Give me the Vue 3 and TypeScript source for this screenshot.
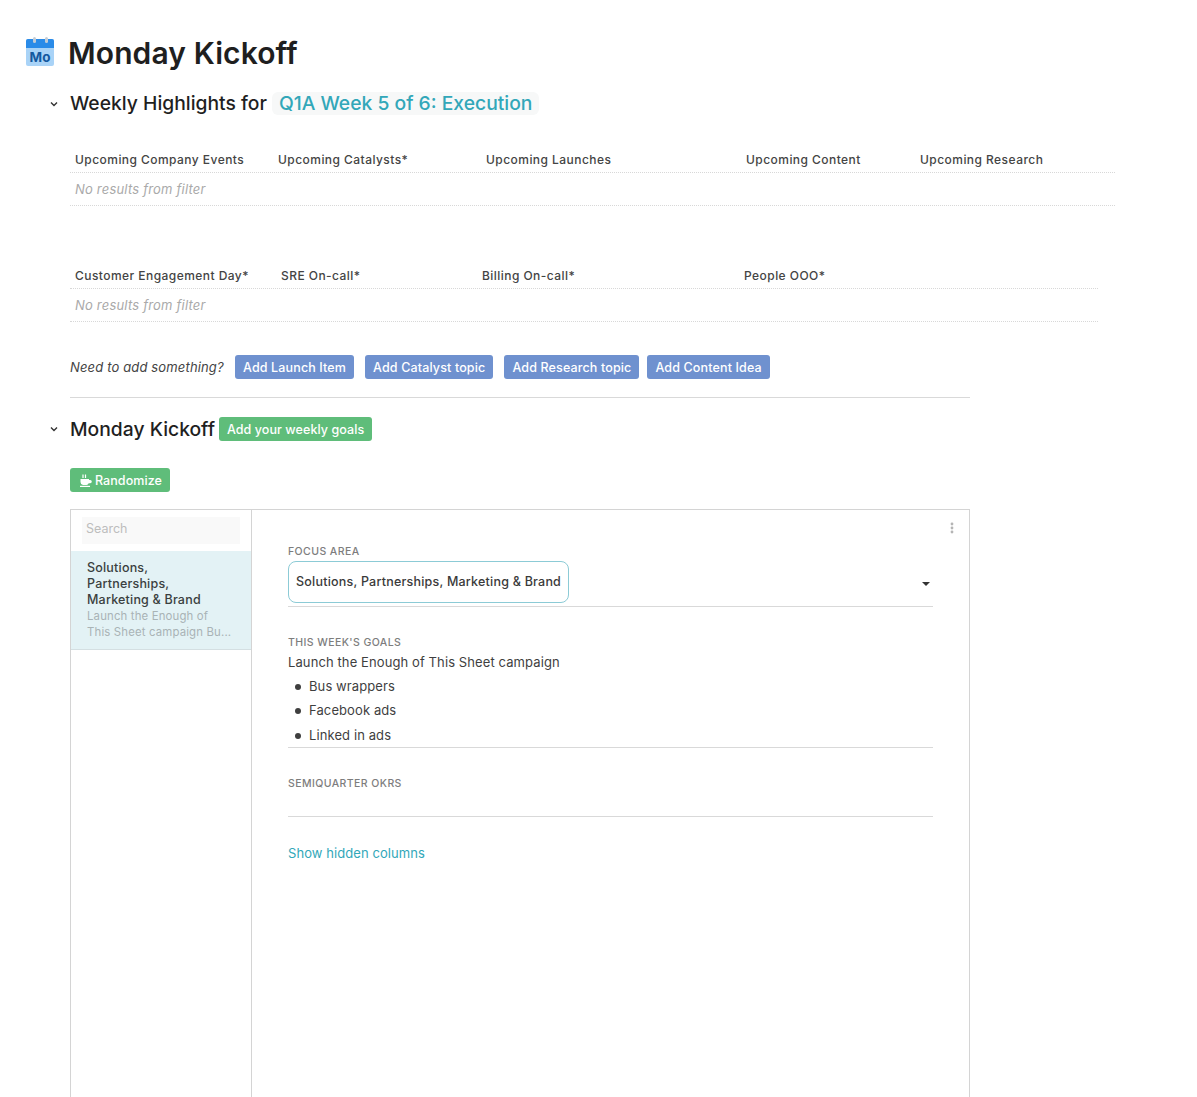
<script setup lang="ts">
interface Column {
  label: string;
  width: string;
}

const highlightColumns: Column[] = [
  { label: 'Upcoming Company Events', width: '203px' },
  { label: 'Upcoming Catalysts*', width: '208px' },
  { label: 'Upcoming Launches', width: '260px' },
  { label: 'Upcoming Content', width: '174px' },
  { label: 'Upcoming Research', width: '200px' },
];

const peopleColumns: Column[] = [
  { label: 'Customer Engagement Day*', width: '206px' },
  { label: 'SRE On-call*', width: '201px' },
  { label: 'Billing On-call*', width: '262px' },
  { label: 'People OOO*', width: '359px' },
];

const addButtons = ['Add Launch Item', 'Add Catalyst topic', 'Add Research topic', 'Add Content Idea'];
const goals = ['Bus wrappers', 'Facebook ads', 'Linked in ads'];
</script>

<template>
  <div class="page">
    <header class="title-row">
      <svg class="cal-icon" width="30" height="32" viewBox="0 0 30 32">
        <rect x="1" y="2" width="28" height="27" rx="2" fill="#a9d3f7" />
        <path d="M1 11V4a2 2 0 0 1 2-2h24a2 2 0 0 1 2 2v7z" fill="#2a8be8" />
        <rect x="8" y="0" width="3" height="6" rx="1.5" fill="#c3ccd5" />
        <rect x="20" y="0" width="3" height="6" rx="1.5" fill="#c3ccd5" />
        <text x="15" y="25" text-anchor="middle" class="cal-text">Mo</text>
      </svg>
      <h1>Monday Kickoff</h1>
    </header>

    <section class="section">
      <div class="heading-row highlights-heading">
        <svg class="chevron" width="8" height="6" viewBox="0 0 8 6"><path d="M1 1.5l3 3 3-3" fill="none" stroke="#333" stroke-width="1.4" /></svg>
        <h2>Weekly Highlights for</h2>
        <span class="week-chip">Q1A Week 5 of 6: Execution</span>
      </div>

      <div class="table first-table">
        <div class="table-head">
          <div v-for="col in highlightColumns" :key="col.label" class="th" :style="{ width: col.width }">{{ col.label }}</div>
        </div>
        <div class="empty-row">No results from filter</div>
      </div>

      <div class="table second-table">
        <div class="table-head">
          <div v-for="col in peopleColumns" :key="col.label" class="th" :style="{ width: col.width }">{{ col.label }}</div>
        </div>
        <div class="empty-row">No results from filter</div>
      </div>

      <div class="add-row">
        <em>Need to add something?</em>
        <button v-for="label in addButtons" :key="label" class="btn btn-blue">{{ label }}</button>
      </div>
      <div class="divider"></div>
    </section>

    <section class="section">
      <div class="heading-row kickoff-heading">
        <svg class="chevron" width="8" height="6" viewBox="0 0 8 6"><path d="M1 1.5l3 3 3-3" fill="none" stroke="#333" stroke-width="1.4" /></svg>
        <h2>Monday Kickoff</h2>
        <button class="btn btn-green">Add your weekly goals</button>
      </div>

      <button class="btn btn-green randomize">
        <svg width="12" height="13" viewBox="0 0 12 13">
          <path d="M0.5 5h8.5v1h1.2a1.6 1.6 0 0 1 0 3.2H8.7A3.4 3.4 0 0 1 6.5 11H3a3 3 0 0 1-2.5-3z" fill="#fff" />
          <path d="M3 0.5v3.5M5.5 0.5v3.5" stroke="#fff" stroke-width="1.2" />
          <rect x="0" y="11.8" width="10" height="1.2" fill="#fff" />
        </svg>
        Randomize
      </button>

      <div class="detail-panel">
        <aside class="list-pane">
          <div class="search">Search</div>
          <div class="list-item">
            <div class="item-title">Solutions, Partnerships, Marketing &amp; Brand</div>
            <div class="item-sub">Launch the Enough of This Sheet campaign Bu...</div>
          </div>
        </aside>
        <div class="detail-pane">
          <svg class="more" width="4" height="12" viewBox="0 0 4 12" fill="#b5b5b5">
            <circle cx="2" cy="2" r="1.4" /><circle cx="2" cy="6" r="1.4" /><circle cx="2" cy="10" r="1.4" />
          </svg>

          <div class="field focus-field">
            <div class="field-label">FOCUS AREA</div>
            <div class="select-row">
              <span class="select-value">Solutions, Partnerships, Marketing &amp; Brand</span>
              <span class="caret"></span>
            </div>
          </div>

          <div class="field goals-field">
            <div class="field-label">THIS WEEK'S GOALS</div>
            <div class="goals-body">
              <div class="goals-intro">Launch the Enough of This Sheet campaign</div>
              <ul>
                <li v-for="goal in goals" :key="goal">{{ goal }}</li>
              </ul>
            </div>
          </div>

          <div class="field okr-field">
            <div class="field-label">SEMIQUARTER OKRS</div>
            <div class="okr-body"></div>
          </div>

          <a class="show-hidden">Show hidden columns</a>
        </div>
      </div>
    </section>
  </div>
</template>

<style>
html,
body {
  margin: 0;
  height: 100%;
  overflow: hidden;
  background: #fff;
}
</style>

<style scoped>
.page {
  box-sizing: border-box;
  height: 1097px;
  overflow: hidden;
  padding: 36px 0 0 70px;
  font-family: Inter, "Liberation Sans", sans-serif;
  color: #262626;
}
.title-row {
  display: flex;
  align-items: center;
  gap: 13px;
  height: 34px;
  margin-left: -45px;
}
.cal-icon {
  flex: none;
}
.cal-text {
  font: 700 13.5px Inter, sans-serif;
  fill: #14599f;
}
h1 {
  margin: 0;
  font-size: 30px;
  line-height: 34px;
  font-weight: 600;
  letter-spacing: 0.1px;
  color: #1f1f1f;
}
.heading-row {
  position: relative;
  display: flex;
  align-items: center;
}
.chevron {
  position: absolute;
  left: -20px;
  top: 12px;
}
h2 {
  margin: 0;
  font-size: 19.3px;
  line-height: 28px;
  font-weight: 500;
  color: #1f1f1f;
}
.highlights-heading {
  margin-top: 19px;
  height: 28px;
}
.week-chip {
  margin-left: 5px;
  padding: 0 7px;
  border-radius: 6px;
  background: #f7f8f8;
  color: #32a7b9;
  font-size: 19.3px;
  line-height: 23px;
  font-weight: 500;
}
.table-head {
  display: flex;
  height: 27px;
  border-bottom: 1px dotted #d8d8d8;
}
.th {
  box-sizing: border-box;
  padding: 7px 0 0 5px;
  font-size: 12px;
  line-height: 15px;
  font-weight: 500;
  letter-spacing: 0.45px;
  color: #444;
  white-space: nowrap;
}
.empty-row {
  box-sizing: border-box;
  height: 33px;
  padding: 8px 0 0 5px;
  border-bottom: 1px dotted #d8d8d8;
  font-size: 13px;
  line-height: 16px;
  font-style: italic;
  letter-spacing: 0.2px;
  color: #aaa;
}
.first-table {
  margin-top: 28px;
  width: 1045px;
}
.second-table {
  margin-top: 55px;
  width: 1028px;
}
.add-row {
  display: flex;
  align-items: center;
  margin-top: 33px;
  height: 24px;
}
.add-row em {
  width: 165px;
  font-size: 13px;
  letter-spacing: 0.15px;
  color: #444;
}
.btn {
  box-sizing: border-box;
  height: 24px;
  border: none;
  border-radius: 3px;
  padding: 0 8px;
  font-family: inherit;
  font-size: 12.5px;
  font-weight: 500;
  letter-spacing: 0.14px;
  color: #fff;
  white-space: nowrap;
}
.btn-blue {
  background: #6f91cf;
  margin-right: 11px;
}
.btn-blue:nth-of-type(3) {
  margin-right: 8px;
}
.btn-green {
  background: #5fbd7a;
  letter-spacing: 0.07px;
}
.divider {
  width: 900px;
  margin-top: 18px;
  border-top: 1px solid #d9d9d9;
}
.kickoff-heading {
  margin-top: 19px;
  height: 24px;
  gap: 4px;
}
.kickoff-heading .chevron {
  top: 9px;
}
.randomize {
  display: flex;
  align-items: center;
  gap: 3px;
  width: 100px;
  margin-top: 27px;
  padding: 0 0 0 10px;
}
.detail-panel {
  display: flex;
  box-sizing: border-box;
  width: 900px;
  height: 700px;
  margin-top: 17px;
  border: 1px solid #d4d4d4;
}
.list-pane {
  box-sizing: border-box;
  flex: none;
  width: 181px;
  border-right: 1px solid #d4d4d4;
  padding-top: 7px;
}
.search {
  box-sizing: border-box;
  height: 27px;
  margin: 0 11px;
  padding: 4px 4px;
  background: #f9f9f9;
  font-size: 12.5px;
  line-height: 16px;
  color: #bdbdbd;
}
.list-item {
  box-sizing: border-box;
  height: 99px;
  margin-top: 7px;
  padding: 9px 16px;
  background: #e3f2f5;
  border-bottom: 1px solid #d4dfe2;
  font-size: 12.5px;
  line-height: 16px;
  letter-spacing: 0.2px;
}
.item-title {
  max-width: 125px;
  font-weight: 500;
  color: #3a3f40;
}
.item-sub {
  max-width: 146px;
  font-size: 11.4px;
  letter-spacing: 0.15px;
  color: #a9b3b5;
}
.detail-pane {
  position: relative;
  flex: 1;
  padding: 35px 36px 0;
}
.more {
  position: absolute;
  top: 12px;
  right: 15px;
}
.field-label {
  font-size: 10.5px;
  line-height: 13px;
  font-weight: 500;
  letter-spacing: 0.42px;
  color: #7d7d7d;
}
.select-row {
  display: flex;
  align-items: center;
  justify-content: space-between;
  box-sizing: border-box;
  height: 46px;
  margin-top: 3px;
  border-bottom: 1px solid #d9d9d9;
  padding-bottom: 3px;
}
.select-value {
  box-sizing: border-box;
  height: 42px;
  padding: 0 7px;
  border: 1px solid #8ccbd6;
  border-radius: 8px;
  font-size: 12.5px;
  line-height: 40px;
  font-weight: 500;
  letter-spacing: 0.22px;
  color: #3a3a3a;
  white-space: nowrap;
}
.caret {
  margin: 3px 3px 0 0;
  border-left: 4px solid transparent;
  border-right: 4px solid transparent;
  border-top: 4px solid #333;
}
.goals-field {
  margin-top: 29px;
}
.goals-body {
  margin-top: 1px;
  height: 97px;
  border-bottom: 1px solid #d9d9d9;
  font-size: 13px;
  line-height: 24px;
  letter-spacing: 0.1px;
  color: #3f3f3f;
}
.goals-body ul {
  list-style: none;
  margin: 0;
  padding: 0;
}
.goals-body li {
  position: relative;
  padding-left: 21px;
  line-height: 24.3px;
}
.goals-body li::before {
  content: '';
  position: absolute;
  left: 7px;
  top: 10px;
  width: 6px;
  height: 6px;
  border-radius: 50%;
  background: #3f3f3f;
}
.okr-field {
  margin-top: 29px;
}
.okr-body {
  height: 26px;
  border-bottom: 1px solid #d9d9d9;
}
.show-hidden {
  display: block;
  margin-top: 27px;
  font-size: 13px;
  line-height: 18px;
  letter-spacing: 0.07px;
  color: #32a7b9;
}
</style>
